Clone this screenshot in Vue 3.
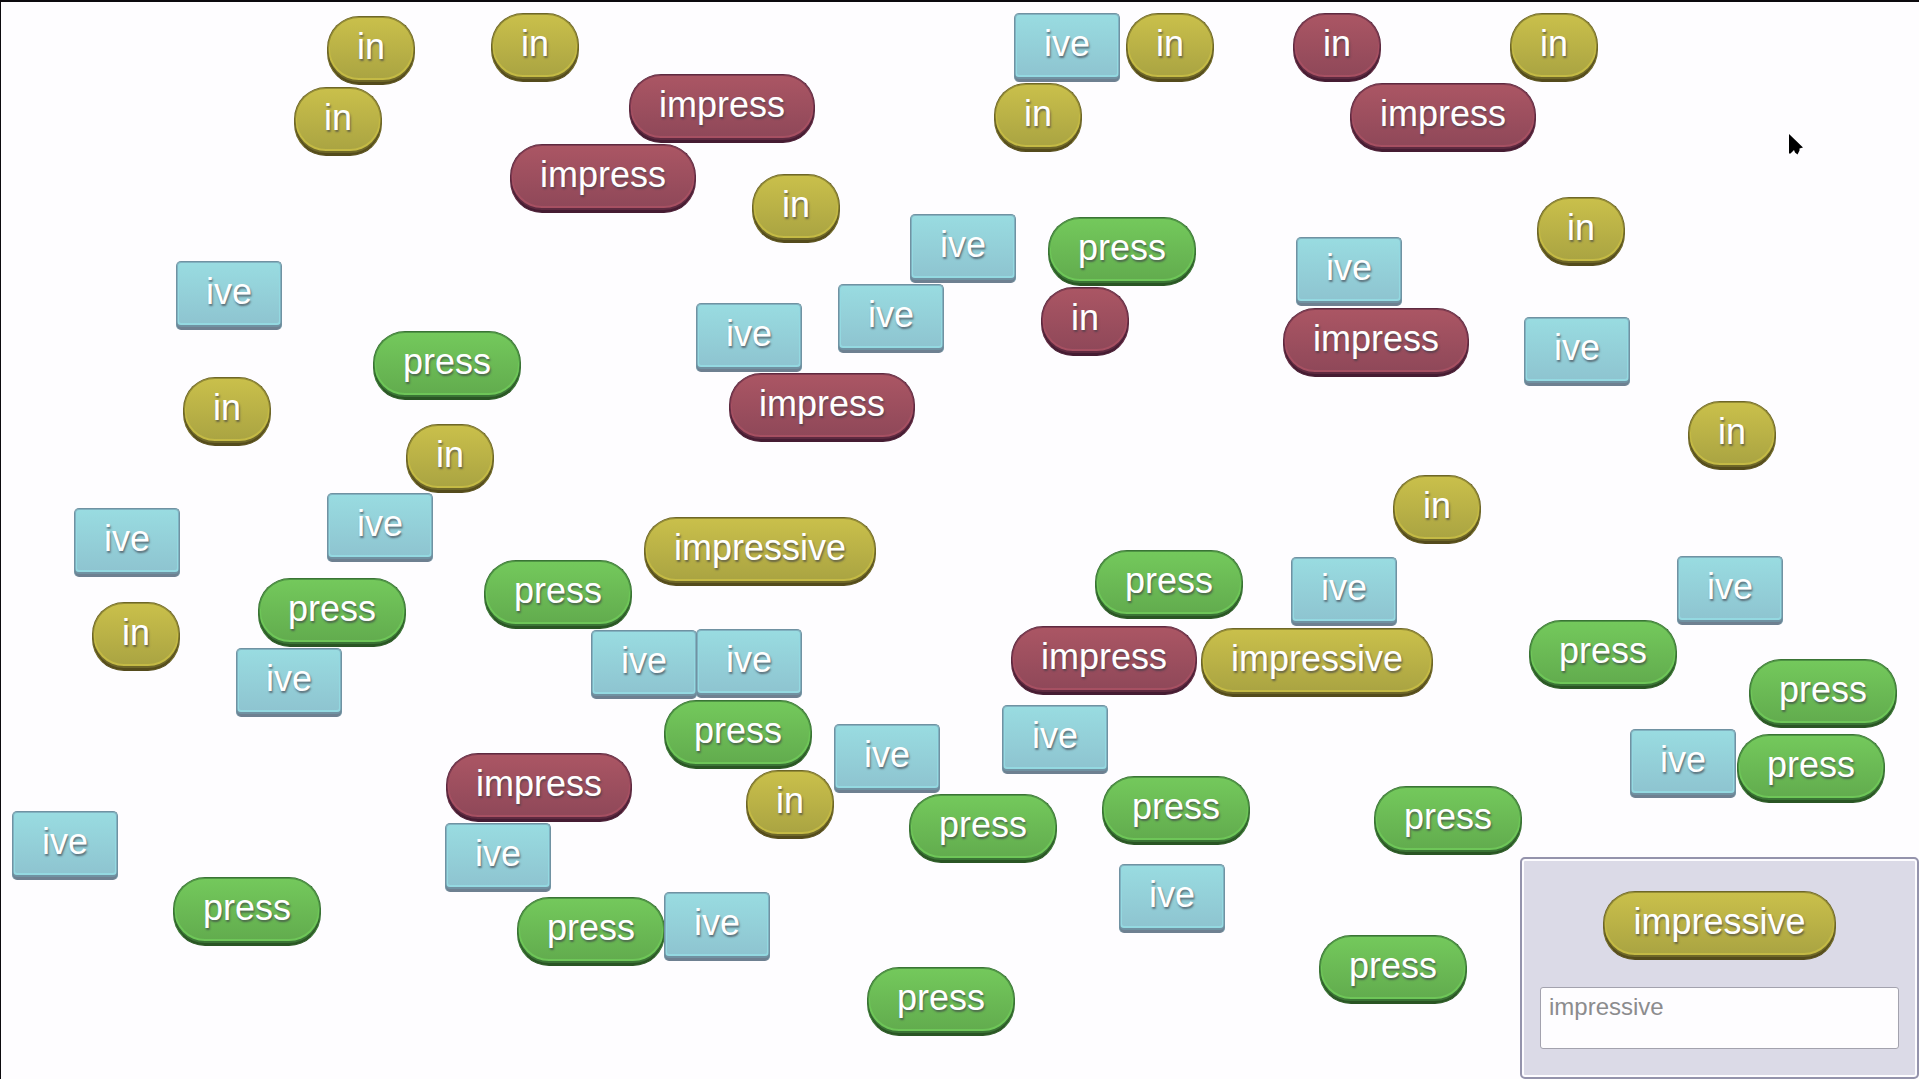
<script setup>
import { ref } from 'vue'

const kinds = {
  in: 'yellow',
  impressive: 'yellow',
  ive: 'blue',
  press: 'green',
  impress: 'red',
}

// [text, left, top, optional colour]
const tiles = [
  ['in', 327, 16],
  ['in', 491, 13],
  ['in', 294, 87],
  ['impress', 629, 74],
  ['impress', 510, 144],
  ['ive', 1014, 13],
  ['in', 1126, 13],
  ['in', 994, 83],
  ['in', 1293, 13, 'red'],
  ['in', 1510, 13],
  ['impress', 1350, 83],
  ['in', 752, 174],
  ['in', 1537, 197],
  ['ive', 910, 214],
  ['press', 1048, 217],
  ['ive', 838, 284],
  ['in', 1041, 287, 'red'],
  ['ive', 176, 261],
  ['ive', 1296, 237],
  ['impress', 1283, 308],
  ['ive', 1524, 317],
  ['ive', 696, 303],
  ['impress', 729, 373],
  ['press', 373, 331],
  ['in', 183, 377],
  ['in', 406, 424],
  ['in', 1688, 401],
  ['in', 1393, 475],
  ['ive', 327, 493],
  ['ive', 74, 508],
  ['impressive', 644, 517],
  ['press', 258, 578],
  ['in', 92, 602],
  ['press', 484, 560],
  ['press', 1095, 550],
  ['ive', 1291, 557],
  ['ive', 1677, 556],
  ['ive', 236, 648],
  ['ive', 591, 630],
  ['ive', 696, 629],
  ['impress', 1011, 626],
  ['impressive', 1201, 628],
  ['press', 1529, 620],
  ['press', 1749, 659],
  ['press', 664, 700],
  ['ive', 1002, 705],
  ['ive', 834, 724],
  ['ive', 1630, 729],
  ['press', 1737, 734],
  ['impress', 446, 753],
  ['in', 746, 770],
  ['press', 1102, 776],
  ['press', 909, 794],
  ['press', 1374, 786],
  ['ive', 12, 811],
  ['ive', 445, 823],
  ['ive', 1119, 864],
  ['press', 173, 877],
  ['press', 517, 897],
  ['ive', 664, 892],
  ['press', 867, 967],
  ['press', 1319, 935],
].map(([text, left, top, color], id) => ({ id, text, left, top, color: color || kinds[text] }))

const entry = ref('impressive')
</script>

<template>
  <main class="board">
    <button
      v-for="tile in tiles"
      :key="tile.id"
      type="button"
      class="tile placed"
      :class="tile.color"
      :style="{ left: tile.left + 'px', top: tile.top + 'px' }"
    >{{ tile.text }}</button>

    <section class="panel">
      <button type="button" class="tile yellow">impressive</button>
      <textarea v-model="entry" class="entry" aria-label="Word parts" spellcheck="false"></textarea>
    </section>

    <svg class="pointer" viewBox="0 0 15 21" width="15" height="21" aria-hidden="true">
      <path d="M0 0 L14 13.5 L10.500 14.500 L10.500 16.500 L8.500 20.500 L6 18.500 L5 16 L1.500 19.500 L0 19.500 Z" />
    </svg>
  </main>
</template>

<style>
body {
  margin: 0;
  background: #fefdff;
}
</style>

<style scoped>
.board {
  position: relative;
  box-sizing: border-box;
  min-height: 100vh;
  overflow: hidden;
  border-top: 2px solid #0c0a0e;
  border-left: 1px solid #0c0a0e;
  font-family: "Liberation Sans", Arial, sans-serif;
}

.tile {
  box-sizing: border-box;
  height: 69px;
  margin: 0;
  padding: 0 29px 9px;
  border: 1px solid var(--edge);
  border-bottom-color: var(--lip);
  border-radius: 32px;
  background: linear-gradient(var(--top), var(--bottom) 62px);
  box-shadow:
    inset 0 -2px 0 var(--lip),
    inset 0 -4px 0 var(--edge),
    inset 0 0 0 1px var(--rim),
    inset 0 -4px 0 2px var(--shine);
  color: #fff;
  font: 36px/41px "Liberation Sans", Arial, sans-serif;
  white-space: nowrap;
  text-shadow: 1px 2px 2px rgba(60, 60, 70, 0.65);
  cursor: pointer;
}

.placed {
  position: absolute;
  margin: -2px 0 0 -1px;
}

.yellow {
  --top: #cac04b;
  --bottom: #aaa442;
  --shine: #c4ba45;
  --rim: #958d35;
  --edge: #6e6728;
  --lip: #544b1c;
}

.green {
  --top: #74c95c;
  --bottom: #62ac4e;
  --shine: #6ec658;
  --rim: #4f9544;
  --edge: #3a7435;
  --lip: #2a5524;
}

.red {
  --top: #ab5664;
  --bottom: #8f4859;
  --shine: #a65062;
  --rim: #803c50;
  --edge: #5e2a40;
  --lip: #451c32;
}

.blue {
  --top: #99dce1;
  --bottom: #8ec4d0;
  --shine: #94d9e1;
  --rim: #80b2c0;
  --edge: #7092a2;
  --lip: #6e8091;
  border-radius: 5px;
}

.panel {
  position: absolute;
  right: 0;
  bottom: 0;
  display: flex;
  flex-direction: column;
  align-items: center;
  gap: 27px;
  box-sizing: border-box;
  width: 399px;
  padding: 32px 18px 28px;
  border: 2px solid #9493ac;
  border-radius: 5px;
  background: #dbdae7;
  box-shadow: inset 0 0 0 2px #fdfcff;
}

.entry {
  display: block;
  box-sizing: border-box;
  width: 100%;
  height: 62px;
  padding: 5px 8px;
  border: 1px solid #a3a2ae;
  border-radius: 3px;
  outline: none;
  background: #fefdff;
  color: #8c8c8e;
  font: 24px/28px "Liberation Sans", Arial, sans-serif;
  resize: none;
}

.pointer {
  position: absolute;
  left: 1788px;
  top: 132px;
}
</style>
